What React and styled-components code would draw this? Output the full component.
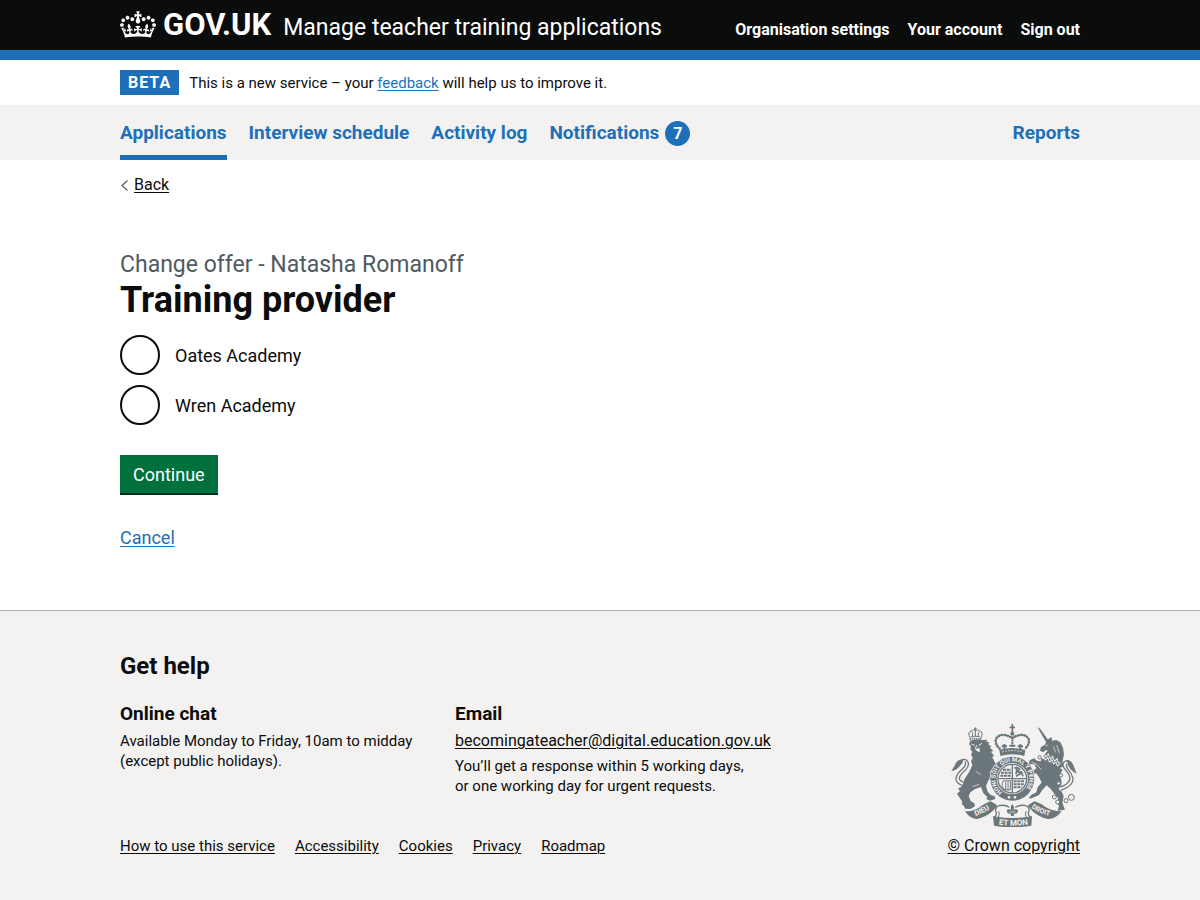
import React from "react";
import styled, { createGlobalStyle } from "styled-components";

const GlobalStyle = createGlobalStyle`
  *, *::before, *::after { box-sizing: border-box; }
  html { background: #f3f2f1; }
  body {
    margin: 0;
    background: #fff;
    color: #0b0c0c;
    font-family: Roboto, "Liberation Sans", sans-serif;
    font-size: 15px;
    line-height: 20px;
  }
  h1, h2, h3, p, ul, fieldset, legend { margin: 0; padding: 0; }
  ul { list-style: none; }
  fieldset { border: 0; min-width: 0; }
`;

const Container = styled.div`
  width: calc(100% - 40px);
  max-width: 960px;
  margin: 0 auto;
`;

const Page = styled.div`
  min-height: 100vh;
  display: flex;
  flex-direction: column;
`;

/* Header */

const Header = styled.header`
  background: #0b0c0c;
  border-bottom: 10px solid #1d70b8;
`;

const HeaderRow = styled(Container)`
  display: flex;
  flex-wrap: wrap;
  align-items: baseline;
`;

const HeaderLogo = styled.a`
  color: #fff;
  font-size: 31px;
  font-weight: 700;
  line-height: 50px;
  text-decoration: none;
  margin-right: 12px;
`;

const Crown = styled.svg`
  width: 36px;
  height: 27px;
  margin-right: 7px;
  vertical-align: -3px;
`;

const ServiceName = styled.a`
  color: #fff;
  font-size: 23px;
  line-height: 30px;
  text-decoration: none;
`;

const AccountNav = styled.nav`
  display: flex;
  gap: 18px;
  margin-left: auto;
`;

const AccountLink = styled.a`
  color: #fff;
  font-size: 16px;
  font-weight: 700;
  text-decoration: none;
`;

/* Phase banner */

const PhaseBanner = styled(Container)`
  display: flex;
  align-items: center;
  gap: 10px;
  padding: 10px 0;
`;

const PhaseTag = styled.strong`
  background: #1d70b8;
  color: #fff;
  padding: 0 8px;
  font-size: 16px;
  line-height: 25px;
  letter-spacing: 1px;
  text-transform: uppercase;
`;

const Link = styled.a`
  color: ${(p) => (p.$muted ? "#0b0c0c" : "#1d70b8")};
  text-decoration: underline;
  text-decoration-thickness: 1px;
  text-underline-offset: 2px;
`;

/* Primary navigation */

const PrimaryNav = styled.nav`
  background: #f3f2f1;
`;

const PrimaryList = styled(Container).attrs({ as: "ul" })`
  display: flex;
  flex-wrap: wrap;
  gap: 0 22px;
`;

const PrimaryItem = styled.li`
  margin-left: ${(p) => (p.$end ? "auto" : "0")};
`;

const PrimaryLink = styled.a`
  display: flex;
  align-items: center;
  gap: 6px;
  height: 55px;
  padding-top: 1px;
  color: #1d70b8;
  font-size: 19px;
  font-weight: 700;
  text-decoration: none;
  box-shadow: ${(p) => (p.$current ? "inset 0 -5px #1d70b8" : "none")};
`;

const Count = styled.span`
  width: 25px;
  height: 25px;
  border-radius: 50%;
  background: #1d70b8;
  color: #fff;
  font-size: 16px;
  line-height: 25px;
  text-align: center;
`;

/* Main content */

const Main = styled(Container).attrs({ as: "main" })`
  padding: 15px 0 60px;
`;

const BackLink = styled.a`
  display: flex;
  align-items: center;
  gap: 5px;
  width: fit-content;
  color: #0b0c0c;
  font-size: 16px;
  text-decoration: none;
`;

const BackText = styled.span`
  text-decoration: underline;
  text-decoration-thickness: 1px;
  text-underline-offset: 2px;
`;

const Chevron = styled.svg`
  width: 9px;
  height: 13px;
`;

const Form = styled.form`
  margin-top: 55px;
`;

const Caption = styled.span`
  display: block;
  color: #505a5f;
  font-size: 23px;
  font-weight: 400;
  line-height: 30px;
`;

const Title = styled.h1`
  font-size: 36px;
  font-weight: 700;
  line-height: 40px;
`;

const Radios = styled.div`
  display: grid;
  gap: 10px;
  margin: 15px 0 30px;
`;

const RadioRow = styled.div`
  display: flex;
  align-items: center;
  gap: 15px;
`;

const RadioInput = styled.input`
  appearance: none;
  width: 40px;
  height: 40px;
  margin: 0;
  border: 2px solid #0b0c0c;
  border-radius: 50%;
  cursor: pointer;
  &:checked {
    background: radial-gradient(#0b0c0c 10px, transparent 11px);
  }
  &:focus {
    outline: none;
    box-shadow: 0 0 0 4px #ffdd00;
  }
`;

const RadioLabel = styled.label`
  font-size: 18px;
  line-height: 25px;
  cursor: pointer;
`;

const SubmitButton = styled.button`
  display: block;
  height: 40px;
  padding: 0 13px 2px;
  border: 0;
  background: #00703c;
  box-shadow: inset 0 -2px #002d18;
  color: #fff;
  font-family: inherit;
  font-size: 18px;
  line-height: 25px;
  cursor: pointer;
`;

const CancelLine = styled.p`
  margin-top: 30px;
  font-size: 18px;
  line-height: 25px;
`;

/* Footer */

const Footer = styled.footer`
  flex: 1;
  background: #f3f2f1;
  border-top: 1px solid #b1b4b6;
  padding: 40px 0;
`;

const FooterRow = styled(Container)`
  display: flex;
  flex-wrap: wrap;
  align-items: flex-end;
  justify-content: space-between;
  gap: 30px;
`;

const FooterTitle = styled.h2`
  font-size: 24px;
  line-height: 30px;
`;

const HelpColumns = styled.div`
  display: flex;
  flex-wrap: wrap;
  gap: 20px 35px;
  margin: 20px 0 40px;
`;

const HelpColumn = styled.section`
  width: 300px;
`;

const HelpTitle = styled.h3`
  margin-bottom: 5px;
  font-size: 19px;
  line-height: 25px;
`;

const HelpText = styled.p`
  & + & {
    margin-top: 5px;
  }
`;

const EmailLink = styled(Link)`
  display: block;
  width: max-content;
  font-size: 16px;
`;

const FooterLinks = styled.ul`
  display: flex;
  flex-wrap: wrap;
  gap: 5px 20px;
`;

const Copyright = styled.div`
  display: flex;
  flex-direction: column;
  align-items: center;
  gap: 9px;
  font-size: 16px;
`;

const Crest = styled.svg`
  width: 126px;
  height: 104px;
`;

const GREY = "#6c777b";
const PAPER = "#f3f2f1";

function RoyalArms() {
  return (
    <Crest viewBox="34 24 378 312" aria-hidden="true" fill={GREY}>
      <defs>
        <path id="garter" d="M191 234 A51 51 0 1 1 245 234" />
        <path id="dieu" d="M106 303 Q132 296 162 273" />
        <path id="etmon" d="M168 328 Q218 336 270 328" />
        <path id="droit" d="M273 277 Q304 300 346 305" />
      </defs>

      {/* lion */}
      <g>
        <path d="M92 73 L87 55 Q96 44 107 45 Q120 45 128 55 L123 73 Q107 68 92 73Z" fill="none" stroke={GREY} strokeWidth="4" strokeDasharray="4 2" />
        <path d="M93 66 Q107 61 122 66 M107 44 V64 M98 52 L99 64 M117 52 L115 64 M107 37 V45 M103 41 H111" fill="none" stroke={GREY} strokeWidth="3" />
        <path d="M92 77 Q107 69 125 75 L144 74 L139 79 L150 83 L145 87 L156 95 L150 97 L161 108 L154 110 L164 124 L157 125 L165 140 L174 158 L178 176 L168 174 L160 162 L152 168 L154 184 L145 199 L139 213 L144 230 L153 240 L165 244 L167 252 L150 257 L140 252 L143 246 L131 235 L124 216 L105 223 L92 232 L87 243 L93 258 L104 265 L106 274 L92 282 L76 281 L73 273 L66 268 L68 260 L59 247 L52 236 L61 228 L55 221 L68 213 L76 190 L89 170 L98 151 L94 139 L99 129 L94 119 L98 111 L92 103 L94 94 L88 88Z" />
        <path d="M95 87 L105 91 M127 85 L117 91 M111 91 L107 101" stroke={PAPER} strokeWidth="3" fill="none" />
        <path d="M106 103 L119 98 L121 111 L113 109Z" fill={PAPER} />
        <path d="M108 168 L123 179 M99 215 L118 208" stroke={PAPER} strokeWidth="2" />
        <path d="M74 213 Q47 206 49 190 Q51 176 68 162 Q82 150 76 140" fill="none" stroke={GREY} strokeWidth="4" />
        <path d="M78 203 Q58 200 59 189 Q62 177 77 166 Q90 153 85 141 Q80 131 67 134" fill="none" stroke={GREY} strokeWidth="4" />
        <path d="M72 132 Q50 134 46 150 L35 168 Q51 166 60 154 Q70 145 72 132Z" />
      </g>

      {/* unicorn */}
      <g>
        <path d="M293 36 L302 42 L327 77 L319 81Z" />
        <path d="M321 77 L330 69 L336 67 L337 77 L350 75 L362 82 L370 98 L373 119 L368 140 L372 152 L360 160 L312 134 L316 117 L324 107 L318 105 L311 112 L301 107 L304 96 L316 89Z" />
        <path d="M317 93 L325 90 M341 95 L348 112 M351 90 L359 114" stroke={PAPER} strokeWidth="2" />
        <path d="M312 120 L318 131 L325 122 L331 137 L338 129 L343 143 L351 136 L354 149 L361 142" fill="none" stroke={PAPER} strokeWidth="8" />
        <path d="M312 120 L318 131 L325 122 L331 137 L338 129 L343 143 L351 136 L354 149 L361 142" fill="none" stroke={GREY} strokeWidth="3" />
        <path d="M306 128 L316 136 L352 153 L369 165 L359 181 L365 194 L366 207 L357 222 L366 230 L372 244 L368 263 L376 284 L354 287 L358 273 L352 262 L356 250 L344 236 L333 222 L321 211 L308 225 L298 240 L276 250 L266 250 L276 239 L290 232 L294 217 L306 202 L298 187 L290 175 L272 177 L278 170 L290 160 L284 148 L267 148 L270 136 L283 130 L292 137 L303 139Z" />
        <path d="M275 141 L292 149 L305 164" fill="none" stroke={PAPER} strokeWidth="2" />
        <path d="M362 216 Q392 206 391 188 Q387 174 376 163 Q365 150 373 141 Q384 133 394 144" fill="none" stroke={GREY} strokeWidth="4" />
        <path d="M364 226 Q402 212 400 190 Q396 175 385 163 Q377 153 383 146" fill="none" stroke={GREY} strokeWidth="4" />
        <path d="M380 134 Q398 137 402 153 L411 176 Q394 169 387 154Z" />
        <g fill={PAPER} stroke={GREY} strokeWidth="3">
          <circle cx="300" cy="127" r="5" />
          <circle cx="344" cy="246" r="6" />
          <circle cx="354" cy="261" r="6" />
          <circle cx="395" cy="247" r="9" />
          <circle cx="379" cy="257" r="6" />
          <circle cx="357" cy="205" r="5" />
          <circle cx="364" cy="181" r="5" />
        </g>
      </g>

      {/* crown above the shield */}
      <g fill="none" stroke={GREY}>
        <path d="M180 101 Q163 85 170 70 Q179 58 194 60 Q211 63 218 70 Q225 63 242 60 Q257 58 266 70 Q273 85 256 101" strokeWidth="4" />
        <path d="M180 101 Q163 85 170 70 Q179 58 194 60 Q211 63 218 70 Q225 63 242 60 Q257 58 266 70 Q273 85 256 101" strokeWidth="8" strokeLinecap="round" strokeDasharray="0 9" />
        <path d="M218 68 V98" strokeWidth="7" strokeLinecap="round" strokeDasharray="0 8" />
        <path d="M218 27 V51 M210 37 H226" strokeWidth="5" />
        <circle cx="218" cy="56" r="6" fill={GREY} stroke="none" />
        <path d="M179 105 Q218 93 257 105 L254 123 Q218 113 182 123Z" fill={GREY} stroke="none" />
        <path d="M187 111 Q218 102 249 111" stroke={PAPER} strokeWidth="2" strokeDasharray="6 3" />
        <path d="M194 87 V103 M186 94 H202 M242 87 V103 M234 94 H250 M209 92 H227" strokeWidth="6" />
      </g>

      {/* garter and shield */}
      <circle cx="218" cy="191" r="68" fill={PAPER} />
      <circle cx="218" cy="191" r="66" />
      <circle cx="218" cy="191" r="47" fill={PAPER} />
      <circle cx="218" cy="191" r="43" fill="none" stroke={GREY} strokeWidth="4" />
      <g stroke={GREY} fill="none" strokeWidth="4">
        <path d="M218 150 V232 M177 191 H259" />
        <path d="M190 164 H214 M184 173 H214 M182 182 H214 M222 199 H254 M222 208 H252 M222 217 H246" strokeWidth="6" strokeDasharray="9 2" />
        <path d="M224 160 Q233 155 240 163 L233 170 L246 174 L229 184 M232 157 L229 178 M244 168 L250 184" strokeWidth="5" />
        <path d="M190 198 Q182 212 195 224 L212 225 V197 Z M198 200 V225 M205 199 V225" strokeWidth="3" />
      </g>
      <text fill={PAPER} fontFamily="Roboto, sans-serif" fontSize="18" fontWeight="700">
        <textPath href="#garter" startOffset="4">HONI SOIT QUI MAL Y PENSE</textPath>
      </text>
      <g fill={PAPER}>
        <circle cx="208" cy="247" r="4" />
        <circle cx="226" cy="247" r="4" />
      </g>

      {/* motto ribbon */}
      <path d="M76 289 Q101 289 118 278 Q139 263 153 259 L172 270 Q168 281 159 288 Q137 307 113 312 Q91 312 76 289Z" />
      <path d="M284 259 Q302 264 319 277 Q339 289 366 289 Q348 313 325 312 Q299 306 280 290 Q270 281 265 271Z" />
      <path d="M160 303 L170 305 Q218 313 268 305 L277 303 L275 332 Q218 342 163 332Z" />
      <path d="M163 308 Q174 300 168 288 Q166 276 178 272 Q197 268 209 277 M274 308 Q262 300 268 288 Q270 276 258 272 Q240 268 227 277" fill="none" stroke={GREY} strokeWidth="4" />
      <path d="M176 308 Q181 297 177 288 M260 308 Q255 297 259 288" fill="none" stroke={GREY} strokeWidth="3" />
      <g fill={PAPER} fontFamily="Roboto, sans-serif" fontWeight="700">
        <text fontSize="22"><textPath href="#dieu" startOffset="2">DIEU</textPath></text>
        <text fontSize="24"><textPath href="#etmon" startOffset="9">ET MON</textPath></text>
        <text fontSize="21"><textPath href="#droit" startOffset="2">DROIT</textPath></text>
      </g>

      {/* flower below the shield */}
      <path d="M218 267 Q227 278 220 287 Q228 279 235 286 Q234 299 222 296 L223 303 H213 L214 296 Q202 299 201 286 Q208 279 216 287 Q209 278 218 267Z" />
      <path d="M208 291 H228" stroke={PAPER} strokeWidth="2" />
    </Crest>
  );
}

const accountLinks = ["Organisation settings", "Your account", "Sign out"];

const primaryLinks = [
  { label: "Applications", current: true },
  { label: "Interview schedule" },
  { label: "Activity log" },
  { label: "Notifications", count: 7 },
  { label: "Reports", end: true },
];

const providers = [
  { id: "oates", name: "Oates Academy" },
  { id: "wren", name: "Wren Academy" },
];

const footerLinks = ["How to use this service", "Accessibility", "Cookies", "Privacy", "Roadmap"];

export default function App() {
  return (
    <Page>
      <GlobalStyle />
      <Header>
        <HeaderRow>
          <HeaderLogo href="#">
            <Crown viewBox="0 0 132 97" aria-hidden="true">
              <path
                fill="currentColor"
                fillRule="evenodd"
                d="M25 30.2c3.5 1.5 7.7-.2 9.1-3.7 1.5-3.6-.2-7.8-3.9-9.2-3.6-1.4-7.6.3-9.1 3.9-1.4 3.5.3 7.5 3.9 9zM9 39.5c3.6 1.5 7.8-.2 9.2-3.7 1.5-3.6-.2-7.8-3.9-9.1-3.6-1.5-7.6.2-9.1 3.8-1.4 3.5.3 7.5 3.8 9zM4.4 57.2c3.5 1.5 7.7-.2 9.1-3.8 1.5-3.6-.2-7.7-3.9-9.1-3.5-1.5-7.6.3-9.1 3.8-1.4 3.5.3 7.6 3.9 9.1zm38.3-21.4c3.5 1.5 7.7-.2 9.1-3.8 1.5-3.6-.2-7.7-3.9-9.1-3.6-1.5-7.6.3-9.1 3.8-1.3 3.6.4 7.7 3.9 9.1zm64.4-5.6c-3.6 1.5-7.8-.2-9.1-3.7-1.5-3.6.2-7.8 3.8-9.2 3.6-1.4 7.7.3 9.2 3.9 1.3 3.5-.4 7.5-3.9 9zm15.9 9.3c-3.6 1.5-7.7-.2-9.1-3.7-1.5-3.6.2-7.8 3.7-9.1 3.6-1.5 7.7.2 9.2 3.8 1.5 3.5-.3 7.5-3.8 9zm4.7 17.7c-3.6 1.5-7.8-.2-9.2-3.8-1.5-3.6.2-7.7 3.9-9.1 3.6-1.5 7.7.3 9.2 3.8 1.3 3.5-.4 7.6-3.9 9.1zM89.3 35.8c-3.6 1.5-7.8-.2-9.2-3.8-1.4-3.6.2-7.7 3.9-9.1 3.6-1.5 7.7.3 9.2 3.8 1.4 3.6-.3 7.7-3.9 9.1zM69.7 17.7l8.9 4.7V9.3l-8.9 2.8c-.2-.3-.5-.6-.9-.9L72.4 0H59.6l3.5 11.2c-.3.3-.6.5-.9.9l-8.8-2.8v13.1l8.8-4.7c.3.3.6.7.9.9l-5 15.4v.1c-.2.8-.4 1.6-.4 2.4 0 4.1 3.1 7.5 7 8.1h.2c.3 0 .7.1 1 .1.4 0 .7 0 1-.1h.2c4-.6 7.1-4.1 7.1-8.1 0-.8-.1-1.7-.4-2.4V34l-5.1-15.4c.4-.2.7-.6 1-.9zM66 92.8c16.9 0 32.8 1.1 47.1 3.2 4-16.9 8.9-26.7 14-33.5l-9.6-3.4c1 4.9 1.1 7.2 0 10.2-1.5-1.4-3-4.3-4.2-8.7L108.6 76c2.8-2 5-3.2 7.5-3.3-4.4 9.4-10 11.9-13.6 11.2-4.3-.8-6.3-4.6-5.6-7.9 1-4.7 5.7-5.9 8-.5 4.3-8.7-3-11.4-7.6-8.8 7.1-7.2 7.9-13.5 2.1-21.1-8 6.1-8.1 12.3-4.5 20.8-4.7-5.4-12.1-2.5-9.5 6.2 3.4-5.2 7.9-2 7.2 3.1-.6 4.3-6.4 7.8-13.5 7.2-10.3-.9-10.9-8-11.2-13.8 2.5-.5 7.1 1.8 11 7.3L80.2 60c-4.1 4.4-8 5.3-12.3 5.4 1.4-4.4 8-11.6 8-11.6H55.5s6.4 7.2 7.9 11.6c-4.2-.1-8-1-12.3-5.4l1.4 16.4c3.9-5.5 8.5-7.7 10.9-7.3-.3 5.8-.9 12.8-11.1 13.8-7.2.6-12.9-2.9-13.5-7.2-.7-5 3.8-8.3 7.1-3.1 2.7-8.7-4.6-11.6-9.4-6.2 3.7-8.5 3.6-14.7-4.6-20.8-5.8 7.6-5 13.9 2.2 21.1-4.7-2.6-11.9.1-7.7 8.8 2.3-5.5 7.1-4.2 8.1.5.7 3.3-1.3 7.1-5.7 7.9-3.5.7-9-1.8-13.5-11.2 2.5.1 4.7 1.3 7.5 3.3l-4.7-15.4c-1.2 4.4-2.7 7.2-4.3 8.7-1.1-3-.9-5.3 0-10.2l-9.5 3.4c5 6.9 9.9 16.7 14 33.5 14.8-2.1 30.8-3.2 47.7-3.2z"
              />
            </Crown>
            GOV.UK
          </HeaderLogo>
          <ServiceName href="#">Manage teacher training applications</ServiceName>
          <AccountNav aria-label="Account">
            {accountLinks.map((label) => (
              <AccountLink key={label} href="#">{label}</AccountLink>
            ))}
          </AccountNav>
        </HeaderRow>
      </Header>

      <PhaseBanner>
        <PhaseTag>Beta</PhaseTag>
        <span>
          This is a new service – your <Link href="#">feedback</Link> will help us to improve it.
        </span>
      </PhaseBanner>

      <PrimaryNav aria-label="Primary">
        <PrimaryList>
          {primaryLinks.map((item) => (
            <PrimaryItem key={item.label} $end={item.end}>
              <PrimaryLink href="#" $current={item.current} aria-current={item.current ? "page" : undefined}>
                {item.label}
                {item.count && <Count>{item.count}</Count>}
              </PrimaryLink>
            </PrimaryItem>
          ))}
        </PrimaryList>
      </PrimaryNav>

      <Main>
        <BackLink href="#">
          <Chevron viewBox="0 0 9 13" aria-hidden="true">
            <path d="M7.5 1.5 L2 6.5 L7.5 11.5" fill="none" stroke="#505a5f" strokeWidth="1.2" />
          </Chevron>
          <BackText>Back</BackText>
        </BackLink>

        <Form onSubmit={(e) => e.preventDefault()}>
          <fieldset>
            <legend>
              <Title>
                <Caption>Change offer - Natasha Romanoff</Caption>
                Training provider
              </Title>
            </legend>
            <Radios>
              {providers.map(({ id, name }) => (
                <RadioRow key={id}>
                  <RadioInput type="radio" name="provider" id={id} value={id} />
                  <RadioLabel htmlFor={id}>{name}</RadioLabel>
                </RadioRow>
              ))}
            </Radios>
          </fieldset>
          <SubmitButton type="submit">Continue</SubmitButton>
        </Form>
        <CancelLine>
          <Link href="#">Cancel</Link>
        </CancelLine>
      </Main>

      <Footer>
        <FooterRow>
          <div>
            <FooterTitle>Get help</FooterTitle>
            <HelpColumns>
              <HelpColumn>
                <HelpTitle>Online chat</HelpTitle>
                <HelpText>Available Monday to Friday, 10am to midday (except public holidays).</HelpText>
              </HelpColumn>
              <HelpColumn>
                <HelpTitle>Email</HelpTitle>
                <HelpText>
                  <EmailLink $muted href="mailto:becomingateacher@digital.education.gov.uk">
                    becomingateacher@digital.education.gov.uk
                  </EmailLink>
                </HelpText>
                <HelpText>You’ll get a response within 5 working days, or one working day for urgent requests.</HelpText>
              </HelpColumn>
            </HelpColumns>
            <FooterLinks>
              {footerLinks.map((label) => (
                <li key={label}>
                  <Link $muted href="#">{label}</Link>
                </li>
              ))}
            </FooterLinks>
          </div>
          <Copyright>
            <RoyalArms />
            <Link $muted href="#">© Crown copyright</Link>
          </Copyright>
        </FooterRow>
      </Footer>
    </Page>
  );
}
